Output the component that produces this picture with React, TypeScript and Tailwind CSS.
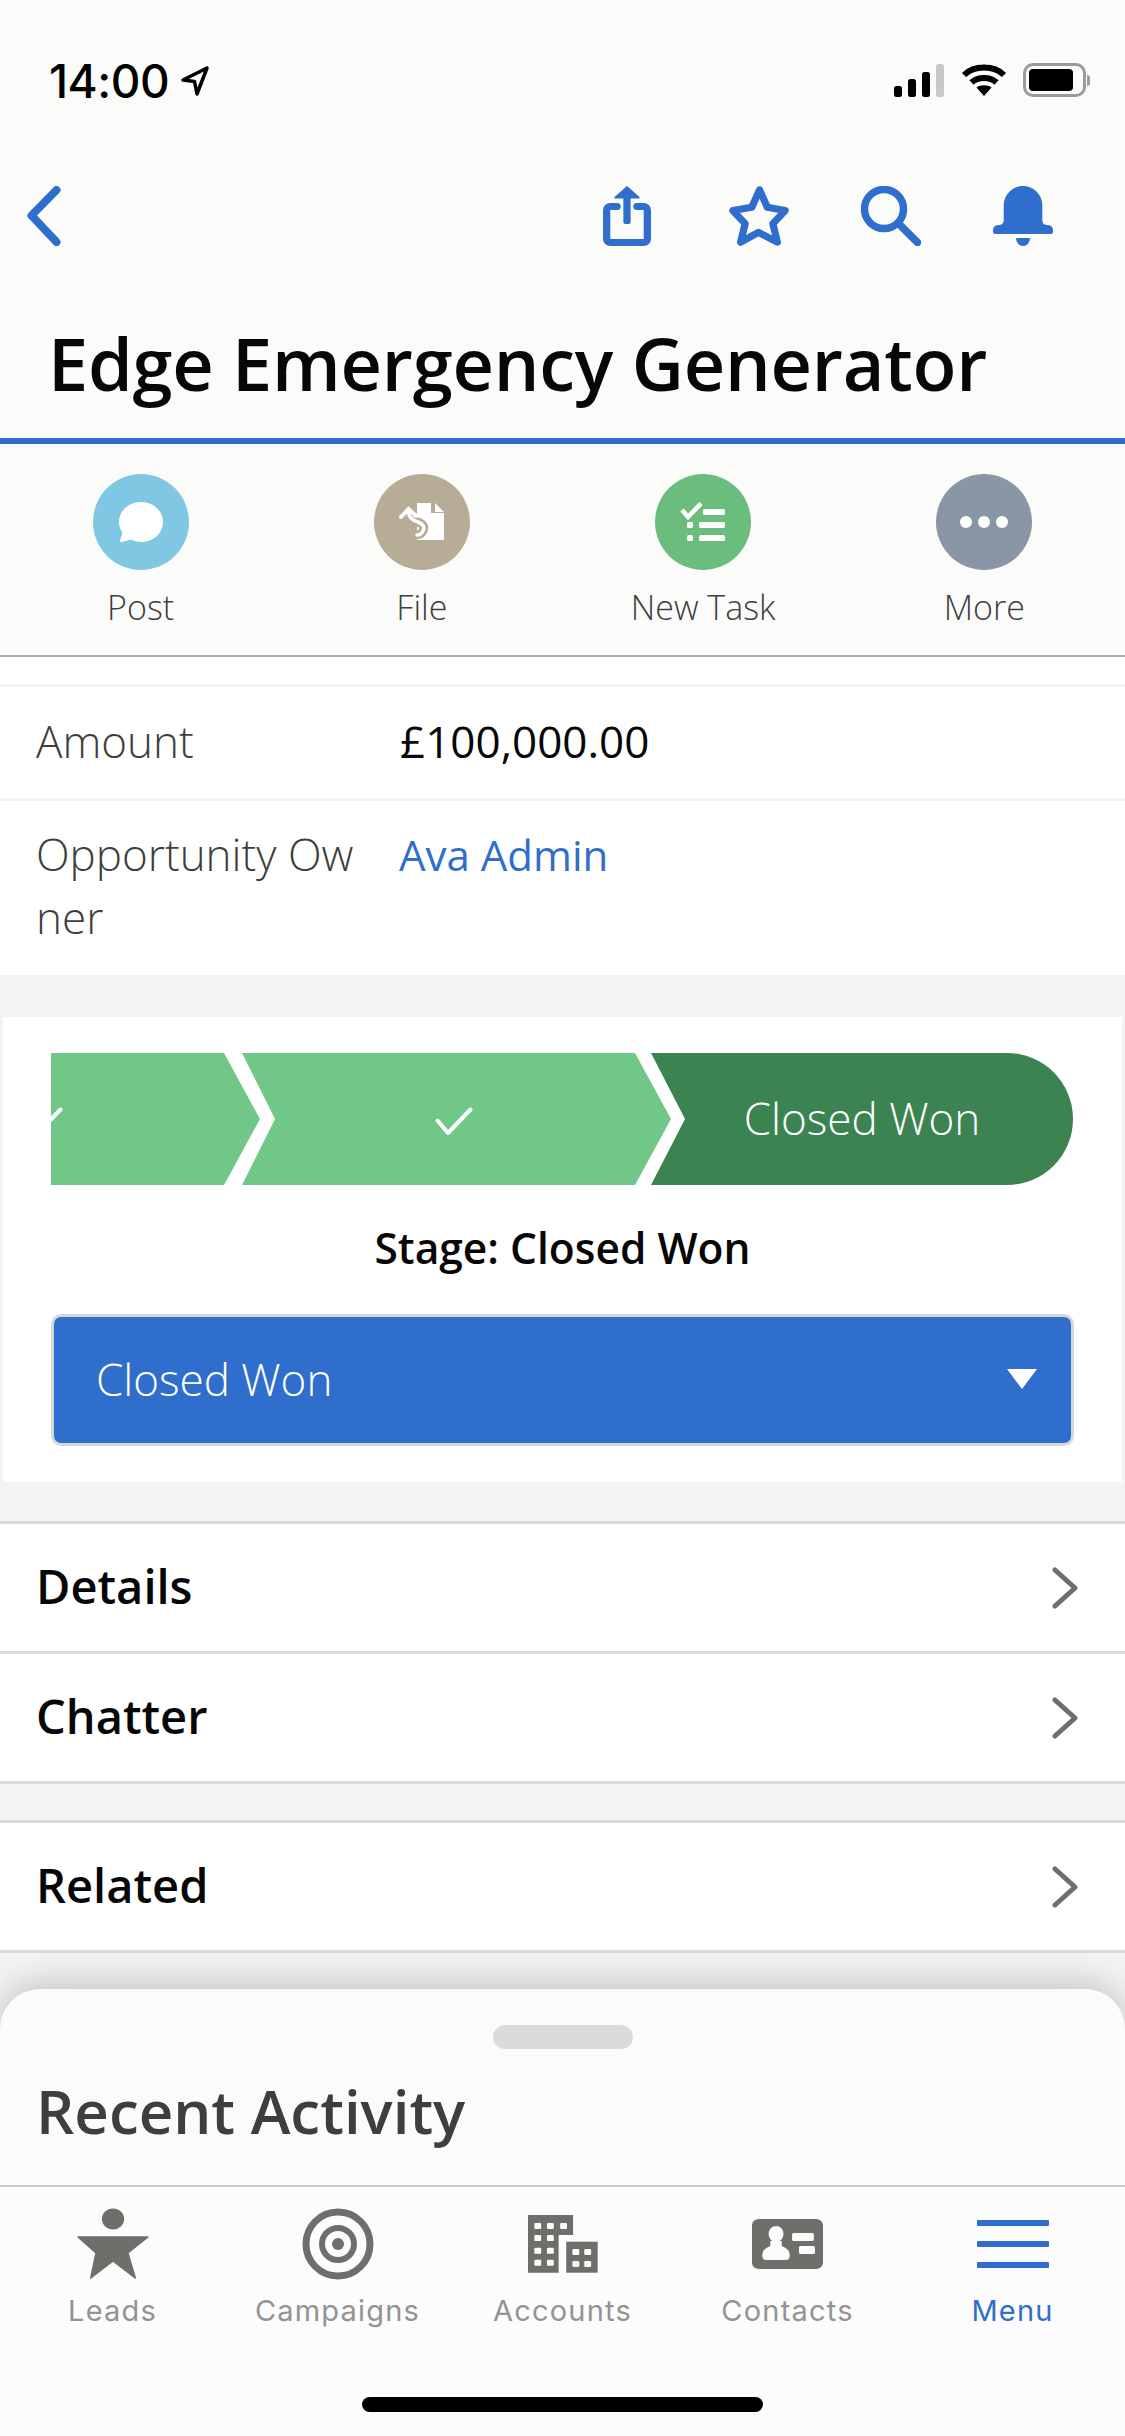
import React from "react";

const BLUE = "#2f6ecc";
const GRAY = "#706e6b";

const Check = () => (
  <svg width="38" height="28" viewBox="0 0 38 28" fill="none" stroke="#fff" strokeWidth="4" strokeLinecap="round" strokeLinejoin="round">
    <path d="M2.5 13.5 L13 26 L35.5 2.5" />
  </svg>
);

const Chevron = () => (
  <svg width="28" height="42" viewBox="0 0 28 42" fill="none" stroke={GRAY} strokeWidth="5" strokeLinecap="round" strokeLinejoin="round">
    <path d="M4 3 L24 21 L4 39" />
  </svg>
);

const Action = ({ bg, label, children }: { bg: string; label: string; children: React.ReactNode }) => (
  <div className="flex-1 flex flex-col items-center">
    <div className={`w-[96px] h-[96px] rounded-full ${bg}`}>
      <svg width="96" height="96" viewBox="0 0 96 96" fill="#fff">{children}</svg>
    </div>
    <div className="mt-[14px] text-[34px] leading-[46px] font-[350] text-[#3e3e3c]">{label}</div>
  </div>
);

const Tab = ({ label, active, children }: { label: string; active?: boolean; children: React.ReactNode }) => (
  <div className="flex-1 flex flex-col items-center">
    <div className="h-[76px] flex items-center justify-center">{children}</div>
    <div
      className={`mt-[11px] text-[29px] leading-[36px] tracking-[1.2px] font-normal font-['Inter',sans-serif] ${
        active ? "text-[#2f6ecc]" : "text-[#939393]"
      }`}
    >
      {label}
    </div>
  </div>
);

const NavRow = ({ label }: { label: string }) => (
  <div className="h-[130px] bg-white flex items-center justify-between pl-[36px] pr-[46px] border-b-[3px] border-[#dddbda]">
    <span className="text-[47px] leading-[60px] mb-[3px] font-semibold text-[#080707]">{label}</span>
    <Chevron />
  </div>
);

export default function App() {
  return (
    <div className="w-[1125px] h-[2436px] overflow-hidden flex flex-col bg-[#f3f3f3] font-['Open_Sans',sans-serif]">
      {/* header */}
      <div className="bg-[#fbfbf9] h-[438px] flex flex-col shrink-0">
        <div className="h-[130px] pt-[58px] pl-[49px] pr-[35px] flex items-start justify-between">
          <div className="flex items-center gap-[11px] h-[46px]">
            <span className="text-[46px] leading-[46px] font-medium tracking-[-0.5px] text-black font-['Inter',sans-serif]">14:00</span>
            <svg width="30" height="32" viewBox="0 0 30 32" fill="none" stroke="#000" strokeWidth="3.5" strokeLinejoin="round">
              <path d="M27 3 L3 15 L14.5 16.5 L17 29 Z" />
            </svg>
          </div>
          <div className="flex items-center gap-[16px] h-[46px] mt-[-1px]">
            <svg width="51" height="33" viewBox="0 0 51 33">
              <rect x="0" y="22" width="8" height="11" rx="2.5" fill="#000" />
              <rect x="14" y="15" width="8" height="18" rx="2.5" fill="#000" />
              <rect x="28" y="8" width="8" height="25" rx="2.5" fill="#000" />
              <rect x="42" y="0" width="8" height="33" rx="2.5" fill="#c8c8c8" />
            </svg>
            <svg width="46" height="33" viewBox="0 0 46 33" fill="none" stroke="#000" strokeWidth="6">
              <path d="M3 11 C13 1 33 1 43 11" />
              <path d="M10.5 18.5 C17 12.5 29 12.5 35.500 18.5" />
              <path d="M23 32 L15.500 23.500 C19 20.500 27 20.500 30.500 23.500 Z" fill="#000" stroke="none" />
            </svg>
            <div className="flex items-center">
              <div className="w-[63px] h-[34px] rounded-[10px] border-[3px] border-[#9b9b9b] p-[3px]">
                <div className="w-[44px] h-full bg-black rounded-[4px]" />
              </div>
              <div className="w-[3px] h-[11px] bg-[#9b9b9b] rounded-r-[3px] ml-[1px]" />
            </div>
          </div>
        </div>
        <div className="h-[172px] flex items-center pl-[27px] pr-[72px] justify-between">
          <svg width="34" height="60" viewBox="0 0 34 60" fill="none" stroke={BLUE} strokeWidth="8" strokeLinecap="round" strokeLinejoin="round">
            <path d="M29.500 4 L4.500 29.500 L29.500 56" />
          </svg>
          <div className="flex items-center">
            <svg className="mr-[78px]" width="48" height="60" viewBox="0 0 46 60" preserveAspectRatio="none" fill="none">
              <path d="M23 0 L35 11 V12.500 H26.500 V36 Q26.500 38 24.500 38 H21.500 Q19.500 38 19.500 36 V12.500 H11 V11 Z" fill={BLUE} />
              <path d="M13.500 20.500 H7 A3.500 3.500 0 0 0 3.500 24 V53 A3.500 3.500 0 0 0 7 56.500 H39 A3.500 3.500 0 0 0 42.500 53 V24 A3.500 3.500 0 0 0 39 20.500 H32.500" stroke={BLUE} strokeWidth="7" strokeLinecap="round" />
            </svg>
            <svg className="mr-[72px]" width="60" height="60" viewBox="2.5 2.5 54 55" preserveAspectRatio="none" fill="none" stroke={BLUE} strokeWidth="6.500" strokeLinejoin="round">
              <path d="M30 6 L37 22 L53 25 L42 37 L46 54 L29 45 L13 54 L17 37 L6 25 L23 22 Z" />
            </svg>
            <svg className="mr-[72px]" width="60" height="60" viewBox="0 0 60 60" fill="none" stroke={BLUE} strokeWidth="7.500" strokeLinecap="round">
              <circle cx="23" cy="23" r="19.500" />
              <path d="M39 39 L56.500 56.500" />
            </svg>
            <svg width="60" height="60" viewBox="0 0 60 60" fill={BLUE}>
              <path d="M10.700 19.500 A19.300 19.500 0 0 1 49.300 19.500 V34 Q49.300 38.500 53.500 39 H55 Q60 39.500 60 44.500 V46 Q60 48 58 48 H2 Q0 48 0 46 V44.500 Q0 39.500 5 39 H6.500 Q10.700 38.500 10.700 34 Z" />
              <path d="M23 52 H37 A7 8 0 0 1 23 52 Z" />
            </svg>
          </div>
        </div>
        <div className="pl-[48px] pt-[16px] text-[72px] leading-[90px] font-semibold tracking-[-0.2px] text-[#080707] whitespace-nowrap">
          Edge Emergency Generator
        </div>
      </div>
      <div className="h-[6px] shrink-0 bg-[#2f6ecc]" />

      {/* actions */}
      <div className="h-[213px] shrink-0 bg-[#fbfbf9] pt-[30px] flex border-b-[2px] border-[#b0adab]">
        <Action bg="bg-[#7fc7e3]" label="Post">
          <path d="M48 28 C60.500 28 70 37 70 48 C70 59 60.500 68 48.500 68 C44.500 68 41 67 38 65.500 L29 68 C27.500 68.300 26.500 67.300 27 66 L29.500 59 C27.500 56 26 52 26 48 C26 37 35.500 28 48 28 Z" />
        </Action>
        <Action bg="bg-[#b7ac96]" label="File">
          <path d="M43 29 H57 V39 H70 V66 H43 Z" />
          <path d="M61 29 L70 38 H61 Z" />
          <path d="M34 38 Q36 46 44 48 Q52 51 49 57 Q47 61 41 61" fill="none" stroke="#b7ac96" strokeWidth="9" />
          <path d="M38 30 L24 40 L24 46 L40 46 Z" fill="#b7ac96" />
          <path d="M34 38 Q36 46 44 48 Q52 51 49 57 Q47 61 43 61" fill="none" stroke="#fff" strokeWidth="3.500" strokeLinecap="round" />
          <path d="M27 43 L34.500 35 L42 42" fill="none" stroke="#fff" strokeWidth="4" strokeLinecap="round" />
        </Action>
        <Action bg="bg-[#6bbd7e]" label="New Task">
          <path d="M27 36 L33 43 L46 29.500" fill="none" stroke="#fff" strokeWidth="4.500" />
          <rect x="48" y="35" width="22" height="6" rx="1.500" />
          <rect x="44" y="48" width="26" height="6" rx="1.500" />
          <rect x="44" y="61" width="26" height="6" rx="1.500" />
          <rect x="32" y="48" width="6" height="6" rx="1.500" />
          <rect x="32" y="61" width="6" height="6" rx="1.500" />
        </Action>
        <Action bg="bg-[#8a96a7]" label="More">
          <circle cx="30" cy="48" r="6" />
          <circle cx="48" cy="48" r="6" />
          <circle cx="66" cy="48" r="6" />
        </Action>
      </div>

      {/* fields */}
      <div className="h-[27px] shrink-0 bg-white" />
      <div className="h-[3px] shrink-0" />
      <div className="h-[111px] shrink-0 bg-white flex items-center text-[44px] leading-[60px] font-[350] pb-[3px]">
        <div className="w-[400px] pl-[36px] text-[#3e3e3c]">Amount</div>
        <div className="text-[#080707] font-normal">£100,000.00</div>
      </div>
      <div className="h-[3px] shrink-0" />
      <div className="h-[174px] shrink-0 bg-white flex text-[44px] leading-[63px] font-[350] pt-[22px]">
        <div className="w-[400px] pl-[36px] pr-[40px] text-[#3e3e3c] break-all">Opportunity Owner</div>
        <div className="text-[#2f6ecc] font-normal text-[42px] ml-[-1px]">Ava Admin</div>
      </div>

      {/* path card */}
      <div className="h-[42px] shrink-0" />
      <div className="h-[465px] shrink-0 bg-white mx-[3px] pt-[36px] px-[48px]">
        <div className="flex h-[132px]">
          <div className="relative overflow-hidden w-[209px] h-full bg-[#71c788] [clip-path:polygon(0_0,173px_0,209px_50%,173px_100%,0_100%)]">
            <div className="absolute left-[-26px] top-[54px]">
              <Check />
            </div>
          </div>
          <div className="ml-[-18px] w-[429px] h-full bg-[#71c788] flex items-center justify-center [clip-path:polygon(0_0,393px_0,429px_50%,393px_100%,0_100%,33px_50%)]">
            <div className="pr-[6px] pt-[4px]">
              <Check />
            </div>
          </div>
          <div className="ml-[-20px] w-[422px] h-full bg-[#3c8352] rounded-r-[66px] flex items-center justify-center pb-[3px] text-white text-[44px] font-light [clip-path:polygon(0_0,100%_0,100%_100%,0_100%,34px_50%)]">
            Closed Won
          </div>
        </div>
        <div className="mt-[33px] h-[60px] flex items-center justify-center text-[42.5px] font-semibold text-[#080707]">Stage: Closed Won</div>
        <div className="mt-[36px] h-[132px] rounded-[10px] border-[3px] border-[#d8d8d8] bg-[#2f6ecc] flex items-center justify-between pl-[42px] pr-[32px] pb-[2px] text-white text-[44px] font-light">
          <span>Closed Won</span>
          <svg width="34" height="20" viewBox="0 0 34 20" fill="#fff">
            <path d="M2 0 H32 L17 20 Z" />
          </svg>
        </div>
      </div>

      {/* nav rows */}
      <div className="h-[39px] shrink-0" />
      <div className="border-t-[3px] border-[#dddbda] shrink-0">
        <NavRow label="Details" />
        <NavRow label="Chatter" />
      </div>
      <div className="h-[36px] shrink-0" />
      <div className="border-t-[3px] border-[#dddbda] shrink-0">
        <NavRow label="Related" />
      </div>

      {/* sheet */}
      <div className="mt-[36px] h-[196px] shrink-0 bg-[#fbfbf9] rounded-t-[40px] shadow-[0_-6px_34px_rgba(0,0,0,0.2)] flex flex-col relative">
        <div className="mt-[36px] w-[140px] h-[24px] rounded-full bg-[#dddbda] self-center" />
        <div className="mt-[22px] pl-[36px] text-[60px] leading-[80px] font-semibold text-[#3e3e3c]">Recent Activity</div>
      </div>

      {/* tabs */}
      <div className="relative flex-1 bg-[#fcfcfc] border-t-[2px] border-[#c9c9d8] pt-[19px] flex flex-col">
        <div className="flex">
          <Tab label="Leads">
            <svg width="72" height="72" viewBox="0 0 68 72" preserveAspectRatio="none" fill={GRAY} strokeLinejoin="round">
              <circle cx="34" cy="11" r="10.500" />
              <path d="M1 29 H67 L48 45 L55 70 L34 53 L13 70 L18 45 Z" stroke={GRAY} strokeWidth="1.500" />
            </svg>
          </Tab>
          <Tab label="Campaigns">
            <svg width="72" height="72" viewBox="0 0 72 72" fill="none" stroke={GRAY}>
              <circle cx="36" cy="36" r="32" strokeWidth="7" />
              <circle cx="36" cy="36" r="16" strokeWidth="6" />
              <circle cx="36" cy="36" r="6" fill={GRAY} stroke="none" />
            </svg>
          </Tab>
          <Tab label="Accounts">
            <svg width="70" height="58" viewBox="0 0 61 58" preserveAspectRatio="none" fill={GRAY}>
              <path d="M0 0 H39.300 V20 H26.700 V57.700 H0 Z" />
              <rect x="33.300" y="26.700" width="27.400" height="31" />
              <g fill="#fcfcfc">
                <rect x="5.500" y="8" width="6" height="6" rx="1" />
                <rect x="16.500" y="8" width="6" height="6" rx="1" />
                <rect x="28" y="8" width="6" height="6" rx="1" />
                <rect x="5.500" y="20" width="6" height="6" rx="1" />
                <rect x="16.500" y="20" width="6" height="6" rx="1" />
                <rect x="5.500" y="32.700" width="6" height="6" rx="1" />
                <rect x="16.500" y="32.700" width="6" height="6" rx="1" />
                <rect x="5.500" y="44.700" width="6" height="6" rx="1" />
                <rect x="16.500" y="44.700" width="6" height="6" rx="1" />
                <rect x="38.700" y="34" width="6" height="6" rx="1" />
                <rect x="49" y="34" width="6" height="6" rx="1" />
                <rect x="38.700" y="46" width="6" height="6" rx="1" />
                <rect x="49" y="46" width="6" height="6" rx="1" />
              </g>
            </svg>
          </Tab>
          <Tab label="Contacts">
            <svg width="71" height="50" viewBox="0 0 62 50" preserveAspectRatio="none">
              <rect width="62" height="50" rx="6" fill={GRAY} />
              <g fill="#fcfcfc">
                <ellipse cx="21" cy="15" rx="6.500" ry="8" />
                <path d="M16 22 H26 V27 Q33 30 33 36 Q33 41 30 41 H12 Q9 41 9 36 Q9 30 16 27 Z" />
                <rect x="35" y="14" width="19" height="8" rx="1.500" />
                <rect x="41" y="27" width="14" height="8" rx="1.500" />
              </g>
            </svg>
          </Tab>
          <Tab label="Menu" active>
            <svg width="72" height="48" viewBox="0 0 72 48" fill={BLUE}>
              <rect y="0" width="72" height="6" rx="1" />
              <rect y="21" width="72" height="6" rx="1" />
              <rect y="42" width="72" height="6" rx="1" />
            </svg>
          </Tab>
        </div>
        <div className="absolute left-[362px] top-[210px] w-[401px] h-[15px] rounded-full bg-black" />
      </div>
    </div>
  );
}
